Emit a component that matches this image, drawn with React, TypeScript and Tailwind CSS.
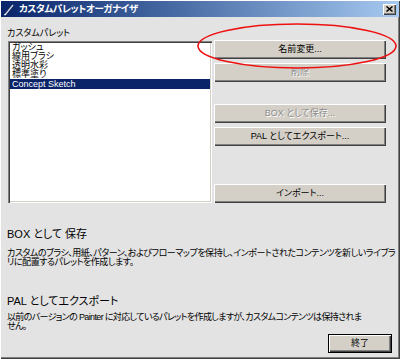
import React from "react";

const jp = "font-['Liberation_Sans','Noto_Sans_CJK_JP',sans-serif] [font-feature-settings:'palt']";

interface WinButtonProps {
  label: string;
  disabled?: boolean;
  className?: string;
}

const WinButton: React.FC<WinButtonProps> = ({ label, disabled, className = "" }) => (
  <div
    className={`flex h-[19px] items-center justify-center bg-[#d4d0c8] text-[9px] leading-none shadow-[inset_1px_1px_0_#ffffff,inset_-1px_-1px_0_#404040,inset_-2px_-2px_0_#808080] ${
      disabled ? "text-[#8c8c8c] [text-shadow:1px_1px_0_#ffffff]" : "text-black"
    } ${className}`}
  >
    {label}
  </div>
);

const paletteItems = ["ガッシュ", "線用ブラシ", "透明水彩", "標準塗り"];

export default function App() {
  return (
    <div
      className={`relative h-[359px] w-[400px] overflow-hidden bg-[#e3e3e3] ${jp} shadow-[inset_1px_1px_0_#ffffff,inset_-1px_-1px_0_#404040,inset_-2px_-2px_0_#808080]`}
    >
      {/* title bar */}
      <div className="mx-[1px] mt-[1px] flex h-[16px] items-center bg-gradient-to-r from-[#0a246a] to-[#a6caf0] pl-[2px] pr-[3px]">
        <svg width="13" height="13" viewBox="0 0 13 13" className="shrink-0">
          <path d="M2 12 L10 2" stroke="#d8d8d8" strokeWidth="1.3" />
          <path d="M1 12 L3 11" stroke="#ffffff" strokeWidth="1" />
        </svg>
        <span className="ml-[3px] text-[9.5px] font-bold tracking-[-0.3px] text-white">カスタムパレットオーガナイザ</span>
        <div className="ml-auto flex h-[11px] w-[13px] items-center justify-center bg-[#d4d0c8] shadow-[inset_1px_1px_0_#ffffff,inset_-1px_-1px_0_#404040,inset_-2px_-2px_0_#808080]">
          <svg width="7" height="6" viewBox="0 0 7 6">
            <path d="M0.5 0.5 L6.5 5.5 M6.5 0.5 L0.5 5.5" stroke="#000" strokeWidth="1.5" />
          </svg>
        </div>
      </div>

      <div className="px-[8px]">
        <div className="-ml-[1px] mt-[10px] h-[12px] text-[9px] leading-[12px] text-black">カスタムパレット</div>

        <div className="mt-[1px] flex items-start">
          {/* palette list */}
          <div className="mt-[1px] h-[162px] w-[204px] bg-white p-[2px] shadow-[inset_1px_1px_0_#808080,inset_2px_2px_0_#404040,inset_-1px_-1px_0_#ffffff,inset_-2px_-2px_0_#d4d0c8]">
            {paletteItems.map((item) => (
              <div key={item} className="h-[9px] pl-[2px] text-[9px] leading-[9px] text-black">
                {item}
              </div>
            ))}
            <div className="h-[10px] bg-[#0a246a] pl-[2px] text-[9px] leading-[10px] text-white">Concept Sketch</div>
          </div>

          {/* buttons */}
          <div className="ml-[2px] flex w-[172px] flex-col">
            <WinButton label="名前変更..." />
            <WinButton label="削除" disabled className="mt-[4px]" />
            <WinButton label="BOX として保存..." disabled className="mt-[22px]" />
            <WinButton label="PAL としてエクスポート..." className="mt-[4px]" />
            <WinButton label="インポート..." className="mt-[38px]" />
          </div>
        </div>

        <div className="-ml-[1px] mt-[25px] text-[11px] leading-[12px] text-black">BOX として 保存</div>
        <p className="-ml-[1px] mt-[9px] whitespace-nowrap text-[9px] leading-[9px] tracking-[-0.47px] text-black">
          カスタムのブラシ、用紙、パターン、およびフローマップを保持し、インポートされたコンテンツを新しいライブラ
          <br />
          リに配置するパレットを作成します。
        </p>

        <div className="-ml-[1px] mt-[28px] text-[11px] leading-[12px] text-black">PAL としてエクスポート</div>
        <p className="-ml-[1px] mt-[6px] whitespace-nowrap text-[9px] leading-[9px] tracking-[-0.65px] text-black">
          以前のバージョンの Painter に対応しているパレットを作成しますが、カスタムコンテンツは保持されま
          <br />
          せん。
        </p>

        <div className="mt-[3px] flex justify-end">
          <div className="flex h-[19px] w-[64px] items-center justify-center bg-[#d4d0c8] text-[9px] leading-none text-black shadow-[inset_0_0_0_1px_#000000,inset_2px_2px_0_#ffffff,inset_-2px_-2px_0_#404040,inset_-3px_-3px_0_#808080]">
            終了
          </div>
        </div>
      </div>

      {/* red annotation */}
      <svg className="pointer-events-none absolute left-0 top-0" width="400" height="359">
        <ellipse cx="297" cy="46" rx="99" ry="22" fill="none" stroke="#ee1111" strokeWidth="1.6" />
      </svg>
    </div>
  );
}
